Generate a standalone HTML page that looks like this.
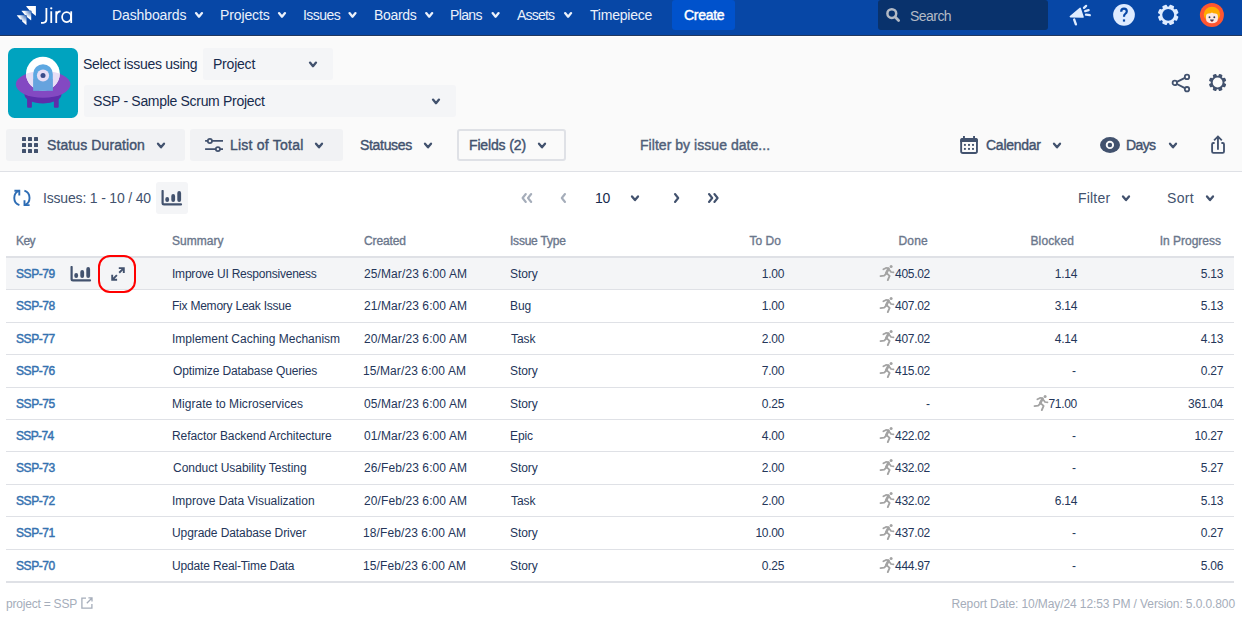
<!DOCTYPE html>
<html><head><meta charset="utf-8"><style>
html,body{margin:0;padding:0;width:1242px;height:617px;overflow:hidden;background:#FFFFFF;position:relative;font-family:"Liberation Sans", sans-serif;}
.t{position:absolute;white-space:nowrap;line-height:1;font-family:"Liberation Sans", sans-serif;}
</style></head><body>
<div style="position:absolute;left:0px;top:0px;width:1242px;height:35px;background:#0747A6;"></div>
<div style="position:absolute;left:0px;top:35px;width:1242px;height:1px;background:#22385E;"></div>
<div style="position:absolute;left:0px;top:36px;width:1242px;height:1px;background:#FFFFFF;"></div>
<div style="position:absolute;left:0px;top:37px;width:1242px;height:134px;background:#FAFAFA;"></div>
<div style="position:absolute;left:0px;top:171px;width:1242px;height:1px;background:#DFE1E6;"></div>
<svg style="position:absolute;left:15px;top:4px" width="24" height="23" viewBox="0 0 24 23">
<defs><radialGradient id="jg0" gradientUnits="userSpaceOnUse" cx="16.2" cy="6.7" r="9.5"><stop offset="0.1" stop-color="#fff" stop-opacity="0.25"/><stop offset="0.75" stop-color="#fff" stop-opacity="1"/></radialGradient><radialGradient id="jg1" gradientUnits="userSpaceOnUse" cx="11.5" cy="11.3" r="9.5"><stop offset="0.1" stop-color="#fff" stop-opacity="0.25"/><stop offset="0.75" stop-color="#fff" stop-opacity="1"/></radialGradient></defs>
<path d="M11.20 2.40 Q11.20 2.10 11.60 2.10 H20.90 V11.50 Q20.90 11.90 20.60 11.70 L16.60 8.40 V7.60 Q16.60 6.40 15.40 6.40 H14.60 Z" fill="#fff"/>
<path d="M6.50 7.00 Q6.50 6.70 6.90 6.70 H16.20 V16.10 Q16.20 16.50 15.90 16.30 L11.90 13.00 V12.20 Q11.90 11.00 10.70 11.00 H9.90 Z" fill="url(#jg0)"/>
<path d="M1.80 11.60 Q1.80 11.30 2.20 11.30 H11.50 V20.70 Q11.50 21.10 11.20 20.90 L7.20 17.60 V16.80 Q7.20 15.60 6.00 15.60 H5.20 Z" fill="url(#jg1)"/>
</svg>
<svg style="position:absolute;left:38px;top:5px" width="38" height="22" viewBox="0 0 38 22">
<path d="M8.4 2.9 V14.6 Q8.4 17.8 5.2 17.8 H3" fill="none" stroke="#fff" stroke-width="1.8"/>
<circle cx="13.25" cy="3.3" r="1.15" fill="#fff"/>
<path d="M13.25 6.3 V18 M18.25 18 V6.3 M18.25 10.6 Q18.8 6.3 22.6 6.3" fill="none" stroke="#fff" stroke-width="1.8"/>
<ellipse cx="28.6" cy="12.1" rx="4.5" ry="5" fill="none" stroke="#fff" stroke-width="1.75"/>
<path d="M33.2 6.3 V18" fill="none" stroke="#fff" stroke-width="1.8"/>
</svg>
<div class="t" style="left:112px;top:8px;font-size:14px;font-weight:400;color:#EBF1FB;letter-spacing:-0.111px;">Dashboards</div>
<svg style="position:absolute;left:193px;top:10px" width="12" height="9.6" viewBox="0 0 12 9.6"><path d="M3.00 3.10 L6.00 6.70 L9.00 3.10" fill="none" stroke="#EBF1FB" stroke-width="2.3" stroke-linecap="round" stroke-linejoin="round"/></svg>
<div class="t" style="left:220px;top:8px;font-size:14px;font-weight:400;color:#EBF1FB;letter-spacing:-0.114px;">Projects</div>
<svg style="position:absolute;left:276px;top:10px" width="12" height="9.6" viewBox="0 0 12 9.6"><path d="M3.00 3.10 L6.00 6.70 L9.00 3.10" fill="none" stroke="#EBF1FB" stroke-width="2.3" stroke-linecap="round" stroke-linejoin="round"/></svg>
<div class="t" style="left:303px;top:8px;font-size:14px;font-weight:400;color:#EBF1FB;letter-spacing:-0.56px;">Issues</div>
<svg style="position:absolute;left:346px;top:10px" width="12" height="9.6" viewBox="0 0 12 9.6"><path d="M3.50 3.10 L6.50 6.70 L9.50 3.10" fill="none" stroke="#EBF1FB" stroke-width="2.3" stroke-linecap="round" stroke-linejoin="round"/></svg>
<div class="t" style="left:374px;top:8px;font-size:14px;font-weight:400;color:#EBF1FB;letter-spacing:-0.3px;">Boards</div>
<svg style="position:absolute;left:423px;top:10px" width="12" height="9.6" viewBox="0 0 12 9.6"><path d="M3.20 3.10 L6.20 6.70 L9.20 3.10" fill="none" stroke="#EBF1FB" stroke-width="2.3" stroke-linecap="round" stroke-linejoin="round"/></svg>
<div class="t" style="left:450px;top:8px;font-size:14px;font-weight:400;color:#EBF1FB;letter-spacing:-0.625px;">Plans</div>
<svg style="position:absolute;left:490px;top:10px" width="12" height="9.6" viewBox="0 0 12 9.6"><path d="M2.60 3.10 L5.60 6.70 L8.60 3.10" fill="none" stroke="#EBF1FB" stroke-width="2.3" stroke-linecap="round" stroke-linejoin="round"/></svg>
<div class="t" style="left:517px;top:8px;font-size:14px;font-weight:400;color:#EBF1FB;letter-spacing:-0.8px;">Assets</div>
<svg style="position:absolute;left:562px;top:10px" width="12" height="9.6" viewBox="0 0 12 9.6"><path d="M3.10 3.10 L6.10 6.70 L9.10 3.10" fill="none" stroke="#EBF1FB" stroke-width="2.3" stroke-linecap="round" stroke-linejoin="round"/></svg>
<div class="t" style="left:590px;top:8px;font-size:14px;font-weight:400;color:#EBF1FB;letter-spacing:-0.212px;">Timepiece</div>
<div style="position:absolute;left:672px;top:0px;width:63px;height:30px;background:#0052CC;border-radius:3px;"></div>
<div class="t" style="left:684px;top:8px;font-size:14px;font-weight:400;color:#FFFFFF;letter-spacing:-0.28px;-webkit-text-stroke:0.45px #FFFFFF;">Create</div>
<div style="position:absolute;left:878px;top:0px;width:170px;height:30px;background:#09326C;border-radius:3px;"></div>
<svg style="position:absolute;left:884px;top:6px" width="18" height="18" viewBox="0 0 18 18"><circle cx="7.8" cy="7.6" r="4.4" fill="none" stroke="#B3BAC5" stroke-width="2.5"/><path d="M11.2 11 L14.6 14.4" stroke="#B3BAC5" stroke-width="2.8" stroke-linecap="round"/></svg>
<div class="t" style="left:910px;top:9px;font-size:14px;font-weight:400;color:#B3BAC5;letter-spacing:-0.54px;">Search</div>
<svg style="position:absolute;left:1068px;top:4px" width="24" height="22" viewBox="0 0 24 22">
<path d="M2.4 12.6 L12.2 4.4 L15 13 Z" fill="#DEEBFF" stroke="#DEEBFF" stroke-width="1.6" stroke-linejoin="round"/>
<path d="M6.2 15.6 L7.9 20.3" stroke="#DEEBFF" stroke-width="2.4" stroke-linecap="round"/>
<path d="M16 3.9 L18.1 1.9 M17.2 7.1 L20.6 6.1 M18 10.6 L21.8 11.2" stroke="#DEEBFF" stroke-width="2.3" stroke-linecap="round"/>
</svg>
<svg style="position:absolute;left:1112px;top:3px" width="24" height="24" viewBox="0 0 24 24">
<circle cx="12" cy="11.85" r="10.85" fill="#DEEBFF"/>
<path d="M9.2 8.7 Q9.2 5.6 12 5.6 Q14.8 5.6 14.8 8.3 Q14.8 9.9 13.2 10.9 Q12 11.6 12 13.8" fill="none" stroke="#0747A6" stroke-width="2.2" stroke-linecap="butt"/>
<rect x="10.9" y="16.4" width="2.2" height="2.2" fill="#0747A6"/>
</svg>
<svg style="position:absolute;left:1156px;top:4px" width="24" height="22" viewBox="0 0 24 22"><circle cx="12.2" cy="10.85" r="8.4" fill="#DEEBFF"/><rect x="9.75" y="0.5499999999999989" width="4.9" height="3.4000000000000004" rx="0.9" fill="#DEEBFF" transform="rotate(22.5 12.2 10.85)"/><rect x="9.75" y="0.5499999999999989" width="4.9" height="3.4000000000000004" rx="0.9" fill="#DEEBFF" transform="rotate(67.5 12.2 10.85)"/><rect x="9.75" y="0.5499999999999989" width="4.9" height="3.4000000000000004" rx="0.9" fill="#DEEBFF" transform="rotate(112.5 12.2 10.85)"/><rect x="9.75" y="0.5499999999999989" width="4.9" height="3.4000000000000004" rx="0.9" fill="#DEEBFF" transform="rotate(157.5 12.2 10.85)"/><rect x="9.75" y="0.5499999999999989" width="4.9" height="3.4000000000000004" rx="0.9" fill="#DEEBFF" transform="rotate(202.5 12.2 10.85)"/><rect x="9.75" y="0.5499999999999989" width="4.9" height="3.4000000000000004" rx="0.9" fill="#DEEBFF" transform="rotate(247.5 12.2 10.85)"/><rect x="9.75" y="0.5499999999999989" width="4.9" height="3.4000000000000004" rx="0.9" fill="#DEEBFF" transform="rotate(292.5 12.2 10.85)"/><rect x="9.75" y="0.5499999999999989" width="4.9" height="3.4000000000000004" rx="0.9" fill="#DEEBFF" transform="rotate(337.5 12.2 10.85)"/><circle cx="12.2" cy="10.85" r="5.95" fill="#0747A6"/></svg>
<svg style="position:absolute;left:1199px;top:2px" width="26" height="26" viewBox="0 0 26 26">
<circle cx="12.9" cy="13" r="12" fill="#FF5630"/>
<ellipse cx="12.95" cy="12.4" rx="8.2" ry="7.6" fill="#FFAB00"/>
<path d="M7 14.5 Q7 11.6 9.5 11.6 Q12 11.6 12.95 10.6 Q13.9 11.6 16.4 11.6 Q18.9 11.6 18.9 14.5 V16.5 Q18.9 21.3 12.95 21.3 Q7 21.3 7 16.5 Z" fill="#FCE6E0"/>
<circle cx="10.5" cy="15.3" r="0.95" fill="#253858"/><circle cx="15.3" cy="15.3" r="0.95" fill="#253858"/>
<path d="M11 17.6 H14.9 Q14.6 19.6 12.95 19.6 Q11.3 19.6 11 17.6 Z" fill="#253858"/>
<path d="M11.8 18.9 Q12.95 18.3 14.1 18.9 Q13.5 19.6 12.95 19.6 Q12.3 19.6 11.8 18.9Z" fill="#DE350B"/>
</svg>
<svg style="position:absolute;left:8px;top:48px" width="70" height="70" viewBox="0 0 70 70">
<defs><clipPath id="domeclip"><circle cx="34.9" cy="25.6" r="16.9"/></clipPath></defs>
<rect x="0" y="0" width="70" height="70" rx="6.5" fill="#00A3BF"/>
<rect x="19.1" y="47" width="4.8" height="12.8" rx="1" fill="#5E2DAA"/>
<rect x="45.9" y="47" width="4.8" height="12.8" rx="1" fill="#5E2DAA"/>
<ellipse cx="35" cy="46.5" rx="18.5" ry="9" fill="#5E2DAA"/>
<ellipse cx="35.15" cy="36.4" rx="27.3" ry="13.4" fill="#8349C2"/>
<circle cx="34.9" cy="25.6" r="16.9" fill="#FFFFFF"/>
<ellipse cx="35.15" cy="36" rx="27.25" ry="13.1" fill="#E7DEF5" clip-path="url(#domeclip)"/>
<path d="M25.2 26 A9.8 9.8 0 0 1 44.8 26 V42.8 H25.2 Z" fill="#5EA8E2"/>
<path d="M25.2 31 V42.8 H44.8 V31 Z" fill="#6E9EDB" opacity="0.55"/>
<circle cx="35" cy="27.5" r="6.1" fill="#E7DEF5"/>
<circle cx="35" cy="27.5" r="2.5" fill="#3A4C8A"/>
</svg>
<div class="t" style="left:83px;top:56.5px;font-size:14px;font-weight:400;color:#172B4D;letter-spacing:-0.294px;">Select issues using</div>
<div style="position:absolute;left:203px;top:48px;width:130px;height:32px;background:#F4F5F7;border-radius:3px;"></div>
<div class="t" style="left:213px;top:56.5px;font-size:14px;font-weight:400;color:#172B4D;letter-spacing:-0.217px;">Project</div>
<svg style="position:absolute;left:307px;top:60px" width="12" height="9.6" viewBox="0 0 12 9.6"><path d="M3.00 2.60 L6.00 6.20 L9.00 2.60" fill="none" stroke="#42526E" stroke-width="2.3" stroke-linecap="round" stroke-linejoin="round"/></svg>
<div style="position:absolute;left:84px;top:85px;width:372px;height:32px;background:#F4F5F7;border-radius:3px;"></div>
<div class="t" style="left:93px;top:94px;font-size:14px;font-weight:400;color:#172B4D;letter-spacing:-0.308px;">SSP - Sample Scrum Project</div>
<svg style="position:absolute;left:430px;top:97px" width="12" height="9.6" viewBox="0 0 12 9.6"><path d="M3.00 2.60 L6.00 6.20 L9.00 2.60" fill="none" stroke="#42526E" stroke-width="2.3" stroke-linecap="round" stroke-linejoin="round"/></svg>
<svg style="position:absolute;left:1170px;top:72px" width="22" height="22" viewBox="0 0 22 22">
<circle cx="4.8" cy="10.9" r="2.2" fill="none" stroke="#42526E" stroke-width="1.8"/>
<circle cx="17" cy="4.9" r="2.2" fill="none" stroke="#42526E" stroke-width="1.8"/>
<circle cx="17" cy="17.2" r="2.2" fill="none" stroke="#42526E" stroke-width="1.8"/>
<path d="M6.9 9.8 L14.9 5.9 M6.9 12 L14.9 16.1" stroke="#42526E" stroke-width="1.9"/>
</svg>
<svg style="position:absolute;left:1206px;top:71px" width="24" height="24" viewBox="0 0 24 24"><circle cx="11.6" cy="11.5" r="6.8" fill="#42526E"/><rect x="9.7" y="2.8000000000000007" width="3.8" height="3.3999999999999995" rx="0.9" fill="#42526E" transform="rotate(22.5 11.6 11.5)"/><rect x="9.7" y="2.8000000000000007" width="3.8" height="3.3999999999999995" rx="0.9" fill="#42526E" transform="rotate(67.5 11.6 11.5)"/><rect x="9.7" y="2.8000000000000007" width="3.8" height="3.3999999999999995" rx="0.9" fill="#42526E" transform="rotate(112.5 11.6 11.5)"/><rect x="9.7" y="2.8000000000000007" width="3.8" height="3.3999999999999995" rx="0.9" fill="#42526E" transform="rotate(157.5 11.6 11.5)"/><rect x="9.7" y="2.8000000000000007" width="3.8" height="3.3999999999999995" rx="0.9" fill="#42526E" transform="rotate(202.5 11.6 11.5)"/><rect x="9.7" y="2.8000000000000007" width="3.8" height="3.3999999999999995" rx="0.9" fill="#42526E" transform="rotate(247.5 11.6 11.5)"/><rect x="9.7" y="2.8000000000000007" width="3.8" height="3.3999999999999995" rx="0.9" fill="#42526E" transform="rotate(292.5 11.6 11.5)"/><rect x="9.7" y="2.8000000000000007" width="3.8" height="3.3999999999999995" rx="0.9" fill="#42526E" transform="rotate(337.5 11.6 11.5)"/><circle cx="11.6" cy="11.5" r="4.9" fill="#FAFAFA"/></svg>
<div style="position:absolute;left:6px;top:129px;width:179px;height:32px;background:#F1F2F4;border-radius:3px;"></div>
<svg style="position:absolute;left:22px;top:137px" width="16" height="16" viewBox="0 0 16 16"><rect x="0" y="0" width="4" height="4" rx="0.6" fill="#42526E"/><rect x="6" y="0" width="4" height="4" rx="0.6" fill="#42526E"/><rect x="12" y="0" width="4" height="4" rx="0.6" fill="#42526E"/><rect x="0" y="6" width="4" height="4" rx="0.6" fill="#42526E"/><rect x="6" y="6" width="4" height="4" rx="0.6" fill="#42526E"/><rect x="12" y="6" width="4" height="4" rx="0.6" fill="#42526E"/><rect x="0" y="12" width="4" height="4" rx="0.6" fill="#42526E"/><rect x="6" y="12" width="4" height="4" rx="0.6" fill="#42526E"/><rect x="12" y="12" width="4" height="4" rx="0.6" fill="#42526E"/></svg>
<div class="t" style="left:47px;top:138px;font-size:14px;font-weight:400;color:#42526E;letter-spacing:0.1px;-webkit-text-stroke:0.4px #42526E;">Status Duration</div>
<svg style="position:absolute;left:155px;top:141px" width="12" height="9.6" viewBox="0 0 12 9.6"><path d="M3.00 2.70 L6.00 6.30 L9.00 2.70" fill="none" stroke="#42526E" stroke-width="2.3" stroke-linecap="round" stroke-linejoin="round"/></svg>
<div style="position:absolute;left:190px;top:129px;width:153px;height:32px;background:#F1F2F4;border-radius:3px;"></div>
<svg style="position:absolute;left:204px;top:136px" width="20" height="17" viewBox="0 0 20 17">
<path d="M1.1 4.9 H19 M1.1 13.1 H19" stroke="#42526E" stroke-width="1.85"/>
<circle cx="5.9" cy="4.9" r="2.1" fill="#F1F2F4" stroke="#42526E" stroke-width="1.75"/>
<circle cx="13.9" cy="13.1" r="2.1" fill="#F1F2F4" stroke="#42526E" stroke-width="1.75"/>
</svg>
<div class="t" style="left:230px;top:138px;font-size:14px;font-weight:400;color:#42526E;letter-spacing:0.225px;-webkit-text-stroke:0.4px #42526E;">List of Total</div>
<svg style="position:absolute;left:313px;top:141px" width="12" height="9.6" viewBox="0 0 12 9.6"><path d="M3.00 2.70 L6.00 6.30 L9.00 2.70" fill="none" stroke="#42526E" stroke-width="2.3" stroke-linecap="round" stroke-linejoin="round"/></svg>
<div class="t" style="left:360px;top:138px;font-size:14px;font-weight:400;color:#42526E;letter-spacing:-0.314px;-webkit-text-stroke:0.4px #42526E;">Statuses</div>
<svg style="position:absolute;left:422px;top:141px" width="12" height="9.6" viewBox="0 0 12 9.6"><path d="M3.00 2.70 L6.00 6.30 L9.00 2.70" fill="none" stroke="#42526E" stroke-width="2.3" stroke-linecap="round" stroke-linejoin="round"/></svg>
<div style="position:absolute;left:457px;top:129px;width:105px;height:28px;border:2px solid #DFE1E6;border-radius:3px;"></div>
<div class="t" style="left:469px;top:138px;font-size:14px;font-weight:400;color:#42526E;letter-spacing:-0.144px;-webkit-text-stroke:0.4px #42526E;">Fields (2)</div>
<svg style="position:absolute;left:536px;top:141px" width="12" height="9.6" viewBox="0 0 12 9.6"><path d="M3.00 2.70 L6.00 6.30 L9.00 2.70" fill="none" stroke="#42526E" stroke-width="2.3" stroke-linecap="round" stroke-linejoin="round"/></svg>
<div class="t" style="left:640px;top:138px;font-size:14px;font-weight:400;color:#505F79;letter-spacing:0.041px;-webkit-text-stroke:0.4px #505F79;">Filter by issue date...</div>
<svg style="position:absolute;left:959px;top:135px" width="20" height="20" viewBox="0 0 20 20">
<rect x="2.15" y="3.85" width="15.8" height="14.1" rx="1.8" fill="none" stroke="#42526E" stroke-width="1.9"/>
<path d="M1.2 7 V4.9 Q1.2 2.9 3.2 2.9 H16.9 Q18.9 2.9 18.9 4.9 V7 Z" fill="#42526E"/>
<rect x="4" y="1" width="1.9" height="3" fill="#42526E"/><rect x="14.1" y="1" width="1.9" height="3" fill="#42526E"/>
<rect x="4.95" y="8.95" width="1.9" height="1.9" fill="#42526E"/><rect x="9.05" y="8.95" width="1.9" height="1.9" fill="#42526E"/><rect x="13.05" y="8.95" width="1.9" height="1.9" fill="#42526E"/>
<rect x="4.95" y="12.95" width="1.9" height="1.9" fill="#42526E"/><rect x="9.05" y="12.95" width="1.9" height="1.9" fill="#42526E"/><rect x="13.05" y="12.95" width="1.9" height="1.9" fill="#42526E"/>
</svg>
<div class="t" style="left:986px;top:138px;font-size:14px;font-weight:400;color:#42526E;letter-spacing:-0.257px;-webkit-text-stroke:0.4px #42526E;">Calendar</div>
<svg style="position:absolute;left:1051px;top:141px" width="12" height="9.6" viewBox="0 0 12 9.6"><path d="M3.00 2.70 L6.00 6.30 L9.00 2.70" fill="none" stroke="#42526E" stroke-width="2.3" stroke-linecap="round" stroke-linejoin="round"/></svg>
<svg style="position:absolute;left:1099px;top:135px" width="22" height="20" viewBox="0 0 22 20">
<ellipse cx="11" cy="10" rx="10" ry="7.9" fill="#42526E"/>
<circle cx="10.9" cy="9.9" r="3.2" fill="none" stroke="#FAFAFA" stroke-width="1.9"/>
</svg>
<div class="t" style="left:1126px;top:138px;font-size:14px;font-weight:400;color:#42526E;letter-spacing:-0.6px;-webkit-text-stroke:0.4px #42526E;">Days</div>
<svg style="position:absolute;left:1167px;top:141px" width="12" height="9.6" viewBox="0 0 12 9.6"><path d="M3.00 2.70 L6.00 6.30 L9.00 2.70" fill="none" stroke="#42526E" stroke-width="2.3" stroke-linecap="round" stroke-linejoin="round"/></svg>
<svg style="position:absolute;left:1209px;top:135px" width="18" height="20" viewBox="0 0 18 20">
<path d="M5.6 8 H4.4 Q3.1 8 3.1 9.3 V16.5 Q3.1 17.8 4.4 17.8 H13.7 Q15 17.8 15 16.5 V9.3 Q15 8 13.7 8 H12.4" fill="none" stroke="#42526E" stroke-width="1.85"/>
<path d="M8.95 14.7 V2.2 M5.1 5.3 L8.95 1.45 L12.8 5.3" fill="none" stroke="#42526E" stroke-width="1.85"/>
</svg>
<svg style="position:absolute;left:12px;top:188px" width="20" height="20" viewBox="0 0 20 20">
<path d="M7.4 17.1 A7.62 7.62 0 0 1 7.4 2.7" fill="none" stroke="#2D6CB4" stroke-width="1.9"/>
<path d="M2.4 2.7 H7.3 V7.6" fill="none" stroke="#2D6CB4" stroke-width="1.9"/>
<path d="M12.4 2.7 A7.62 7.62 0 0 1 12.4 17.1" fill="none" stroke="#2D6CB4" stroke-width="1.9"/>
<path d="M17.6 17.1 H12.5 V12.2" fill="none" stroke="#2D6CB4" stroke-width="1.9"/>
</svg>
<div class="t" style="left:43px;top:191px;font-size:14px;font-weight:400;color:#42526E;letter-spacing:-0.178px;">Issues: 1 - 10 / 40</div>
<div style="position:absolute;left:156px;top:182px;width:32px;height:32px;background:#F4F5F7;border-radius:3px;"></div>
<svg style="position:absolute;left:161px;top:190px" width="22" height="16" viewBox="0 0 22 16">
<path d="M1.6 1 V13 Q1.6 14.4 3 14.4 H20" fill="none" stroke="#42526E" stroke-width="2.2" stroke-linecap="round"/>
<rect x="4.3" y="7" width="3.8" height="5" rx="1.9" fill="#42526E"/>
<rect x="10.3" y="4" width="3.8" height="8" rx="1.9" fill="#42526E"/>
<rect x="16.3" y="1" width="3.8" height="11" rx="1.9" fill="#42526E"/>
</svg>
<svg style="position:absolute;left:518px;top:192px" width="16" height="12" viewBox="0 0 16 12"><path d="M7.8 2 L4.6 6 L7.8 10 M13.2 2 L10 6 L13.2 10" fill="none" stroke="#A5ADBA" stroke-width="2.1" stroke-linecap="round" stroke-linejoin="round"/></svg>
<svg style="position:absolute;left:558px;top:192px" width="12" height="12" viewBox="0 0 12 12"><path d="M7 2 L3.8 6 L7 10" fill="none" stroke="#A5ADBA" stroke-width="2.1" stroke-linecap="round" stroke-linejoin="round"/></svg>
<div class="t" style="left:595px;top:191px;font-size:14px;font-weight:400;color:#172B4D;letter-spacing:-0.2px;">10</div>
<svg style="position:absolute;left:629px;top:194px" width="12" height="9.6" viewBox="0 0 12 9.6"><path d="M3.00 2.50 L6.00 6.10 L9.00 2.50" fill="none" stroke="#42526E" stroke-width="2.3" stroke-linecap="round" stroke-linejoin="round"/></svg>
<svg style="position:absolute;left:670px;top:192px" width="12" height="12" viewBox="0 0 12 12"><path d="M5 2 L8.2 6 L5 10" fill="none" stroke="#42526E" stroke-width="2.1" stroke-linecap="round" stroke-linejoin="round"/></svg>
<svg style="position:absolute;left:705px;top:192px" width="18" height="12" viewBox="0 0 18 12"><path d="M4 2 L7.2 6 L4 10 M9.4 2 L12.6 6 L9.4 10" fill="none" stroke="#42526E" stroke-width="2.1" stroke-linecap="round" stroke-linejoin="round"/></svg>
<div class="t" style="left:1078px;top:191px;font-size:14px;font-weight:400;color:#42526E;letter-spacing:0.2px;">Filter</div>
<svg style="position:absolute;left:1120px;top:194px" width="12" height="9.6" viewBox="0 0 12 9.6"><path d="M3.00 2.50 L6.00 6.10 L9.00 2.50" fill="none" stroke="#42526E" stroke-width="2.3" stroke-linecap="round" stroke-linejoin="round"/></svg>
<div class="t" style="left:1167px;top:191px;font-size:14px;font-weight:400;color:#42526E;letter-spacing:0.333px;">Sort</div>
<svg style="position:absolute;left:1204px;top:194px" width="12" height="9.6" viewBox="0 0 12 9.6"><path d="M3.00 2.50 L6.00 6.10 L9.00 2.50" fill="none" stroke="#42526E" stroke-width="2.3" stroke-linecap="round" stroke-linejoin="round"/></svg>
<div class="t" style="left:16px;top:235px;font-size:12px;font-weight:400;color:#6B778C;letter-spacing:-0.6px;-webkit-text-stroke:0.35px #6B778C;">Key</div>
<div class="t" style="left:172px;top:235px;font-size:12px;font-weight:400;color:#6B778C;letter-spacing:0.033px;-webkit-text-stroke:0.35px #6B778C;">Summary</div>
<div class="t" style="left:364px;top:235px;font-size:12px;font-weight:400;color:#6B778C;letter-spacing:-0.117px;-webkit-text-stroke:0.35px #6B778C;">Created</div>
<div class="t" style="left:510px;top:235px;font-size:12px;font-weight:400;color:#6B778C;letter-spacing:-0.222px;-webkit-text-stroke:0.35px #6B778C;">Issue Type</div>
<div class="t" style="right:461px;top:235px;font-size:12px;font-weight:400;color:#6B778C;letter-spacing:0.05px;-webkit-text-stroke:0.35px #6B778C;">To Do</div>
<div class="t" style="right:314px;top:235px;font-size:12px;font-weight:400;color:#6B778C;letter-spacing:0.233px;-webkit-text-stroke:0.35px #6B778C;">Done</div>
<div class="t" style="right:168px;top:235px;font-size:12px;font-weight:400;color:#6B778C;letter-spacing:0.117px;-webkit-text-stroke:0.35px #6B778C;">Blocked</div>
<div class="t" style="right:21px;top:235px;font-size:12px;font-weight:400;color:#6B778C;-webkit-text-stroke:0.35px #6B778C;">In Progress</div>
<div style="position:absolute;left:6px;top:256px;width:1228px;height:2px;background:#DFE1E6;"></div>
<div style="position:absolute;left:6px;top:258px;width:1228px;height:31px;background:#F4F5F7;"></div>
<div style="position:absolute;left:6px;top:289px;width:1228px;height:1px;background:#DFE1E6;"></div>
<div class="t" style="left:16px;top:268px;font-size:12px;font-weight:400;color:#3572B0;letter-spacing:-0.44px;-webkit-text-stroke:0.45px #3572B0;">SSP-79</div>
<div class="t" style="left:172px;top:268px;font-size:12px;font-weight:400;color:#24365A;letter-spacing:-0.217px;">Improve UI Responsiveness</div>
<div class="t" style="left:364px;top:268px;font-size:12px;font-weight:400;color:#24365A;letter-spacing:0.1px;">25/Mar/23 6:00 AM</div>
<div class="t" style="left:510px;top:268px;font-size:12px;font-weight:400;color:#24365A;letter-spacing:-0.08px;">Story</div>
<div class="t" style="right:458px;top:268px;font-size:12px;font-weight:400;color:#24365A;letter-spacing:-0.3px;">1.00</div>
<div class="t" style="right:312px;top:268px;font-size:12px;font-weight:400;color:#24365A;letter-spacing:-0.3px;">405.02</div><svg style="position:absolute;left:877px;top:262px" width="20" height="22" viewBox="0 0 20 22"><g fill="none" stroke="#A3A3A3" stroke-linecap="round" stroke-linejoin="round"><circle cx="14.1" cy="4.5" r="1.5" fill="#A3A3A3" stroke="none"/><path d="M6.4 7.3 L8.6 6.2 Q10 5.6 11.3 6.4" stroke-width="1.8"/><path d="M11.6 6.6 L9.2 11.2" stroke-width="2.6"/><path d="M12.5 7.9 L14 10 L16.5 10.3" stroke-width="1.7"/><path d="M8.9 12 L7.2 13.6 L3.5 14.2" stroke-width="1.8"/><path d="M9.8 11.4 L12.6 13.9 L10.8 18.1" stroke-width="1.9"/></g></svg>
<div class="t" style="right:165px;top:268px;font-size:12px;font-weight:400;color:#24365A;letter-spacing:-0.3px;">1.14</div>
<div class="t" style="right:19px;top:268px;font-size:12px;font-weight:400;color:#24365A;letter-spacing:-0.3px;">5.13</div>
<div style="position:absolute;left:6px;top:322px;width:1228px;height:1px;background:#DFE1E6;"></div>
<div class="t" style="left:16px;top:300px;font-size:12px;font-weight:400;color:#3572B0;letter-spacing:-0.44px;-webkit-text-stroke:0.45px #3572B0;">SSP-78</div>
<div class="t" style="left:172px;top:300px;font-size:12px;font-weight:400;color:#24365A;letter-spacing:-0.23px;">Fix Memory Leak Issue</div>
<div class="t" style="left:364px;top:300px;font-size:12px;font-weight:400;color:#24365A;letter-spacing:0.1px;">21/Mar/23 6:00 AM</div>
<div class="t" style="left:510px;top:300px;font-size:12px;font-weight:400;color:#24365A;letter-spacing:-0.08px;">Bug</div>
<div class="t" style="right:458px;top:300px;font-size:12px;font-weight:400;color:#24365A;letter-spacing:-0.3px;">1.00</div>
<div class="t" style="right:312px;top:300px;font-size:12px;font-weight:400;color:#24365A;letter-spacing:-0.3px;">407.02</div><svg style="position:absolute;left:877px;top:294px" width="20" height="22" viewBox="0 0 20 22"><g fill="none" stroke="#A3A3A3" stroke-linecap="round" stroke-linejoin="round"><circle cx="14.1" cy="4.5" r="1.5" fill="#A3A3A3" stroke="none"/><path d="M6.4 7.3 L8.6 6.2 Q10 5.6 11.3 6.4" stroke-width="1.8"/><path d="M11.6 6.6 L9.2 11.2" stroke-width="2.6"/><path d="M12.5 7.9 L14 10 L16.5 10.3" stroke-width="1.7"/><path d="M8.9 12 L7.2 13.6 L3.5 14.2" stroke-width="1.8"/><path d="M9.8 11.4 L12.6 13.9 L10.8 18.1" stroke-width="1.9"/></g></svg>
<div class="t" style="right:165px;top:300px;font-size:12px;font-weight:400;color:#24365A;letter-spacing:-0.3px;">3.14</div>
<div class="t" style="right:19px;top:300px;font-size:12px;font-weight:400;color:#24365A;letter-spacing:-0.3px;">5.13</div>
<div style="position:absolute;left:6px;top:354px;width:1228px;height:1px;background:#DFE1E6;"></div>
<div class="t" style="left:16px;top:333px;font-size:12px;font-weight:400;color:#3572B0;letter-spacing:-0.44px;-webkit-text-stroke:0.45px #3572B0;">SSP-77</div>
<div class="t" style="left:172px;top:333px;font-size:12px;font-weight:400;color:#24365A;">Implement Caching Mechanism</div>
<div class="t" style="left:364px;top:333px;font-size:12px;font-weight:400;color:#24365A;letter-spacing:0.1px;">20/Mar/23 6:00 AM</div>
<div class="t" style="left:511px;top:333px;font-size:12px;font-weight:400;color:#24365A;letter-spacing:-0.08px;">Task</div>
<div class="t" style="right:458px;top:333px;font-size:12px;font-weight:400;color:#24365A;letter-spacing:-0.3px;">2.00</div>
<div class="t" style="right:312px;top:333px;font-size:12px;font-weight:400;color:#24365A;letter-spacing:-0.3px;">407.02</div><svg style="position:absolute;left:877px;top:327px" width="20" height="22" viewBox="0 0 20 22"><g fill="none" stroke="#A3A3A3" stroke-linecap="round" stroke-linejoin="round"><circle cx="14.1" cy="4.5" r="1.5" fill="#A3A3A3" stroke="none"/><path d="M6.4 7.3 L8.6 6.2 Q10 5.6 11.3 6.4" stroke-width="1.8"/><path d="M11.6 6.6 L9.2 11.2" stroke-width="2.6"/><path d="M12.5 7.9 L14 10 L16.5 10.3" stroke-width="1.7"/><path d="M8.9 12 L7.2 13.6 L3.5 14.2" stroke-width="1.8"/><path d="M9.8 11.4 L12.6 13.9 L10.8 18.1" stroke-width="1.9"/></g></svg>
<div class="t" style="right:165px;top:333px;font-size:12px;font-weight:400;color:#24365A;letter-spacing:-0.3px;">4.14</div>
<div class="t" style="right:19px;top:333px;font-size:12px;font-weight:400;color:#24365A;letter-spacing:-0.3px;">4.13</div>
<div style="position:absolute;left:6px;top:387px;width:1228px;height:1px;background:#DFE1E6;"></div>
<div class="t" style="left:16px;top:365px;font-size:12px;font-weight:400;color:#3572B0;letter-spacing:-0.44px;-webkit-text-stroke:0.45px #3572B0;">SSP-76</div>
<div class="t" style="left:173px;top:365px;font-size:12px;font-weight:400;color:#24365A;letter-spacing:-0.133px;">Optimize Database Queries</div>
<div class="t" style="left:363px;top:365px;font-size:12px;font-weight:400;color:#24365A;letter-spacing:0.1px;">15/Mar/23 6:00 AM</div>
<div class="t" style="left:510px;top:365px;font-size:12px;font-weight:400;color:#24365A;letter-spacing:-0.08px;">Story</div>
<div class="t" style="right:458px;top:365px;font-size:12px;font-weight:400;color:#24365A;letter-spacing:-0.3px;">7.00</div>
<div class="t" style="right:312px;top:365px;font-size:12px;font-weight:400;color:#24365A;letter-spacing:-0.3px;">415.02</div><svg style="position:absolute;left:877px;top:359px" width="20" height="22" viewBox="0 0 20 22"><g fill="none" stroke="#A3A3A3" stroke-linecap="round" stroke-linejoin="round"><circle cx="14.1" cy="4.5" r="1.5" fill="#A3A3A3" stroke="none"/><path d="M6.4 7.3 L8.6 6.2 Q10 5.6 11.3 6.4" stroke-width="1.8"/><path d="M11.6 6.6 L9.2 11.2" stroke-width="2.6"/><path d="M12.5 7.9 L14 10 L16.5 10.3" stroke-width="1.7"/><path d="M8.9 12 L7.2 13.6 L3.5 14.2" stroke-width="1.8"/><path d="M9.8 11.4 L12.6 13.9 L10.8 18.1" stroke-width="1.9"/></g></svg>
<div class="t" style="right:166px;top:365px;font-size:12px;font-weight:400;color:#24365A;">-</div>
<div class="t" style="right:19px;top:365px;font-size:12px;font-weight:400;color:#24365A;letter-spacing:-0.3px;">0.27</div>
<div style="position:absolute;left:6px;top:419px;width:1228px;height:1px;background:#DFE1E6;"></div>
<div class="t" style="left:16px;top:398px;font-size:12px;font-weight:400;color:#3572B0;letter-spacing:-0.44px;-webkit-text-stroke:0.45px #3572B0;">SSP-75</div>
<div class="t" style="left:172px;top:398px;font-size:12px;font-weight:400;color:#24365A;letter-spacing:0.039px;">Migrate to Microservices</div>
<div class="t" style="left:364px;top:398px;font-size:12px;font-weight:400;color:#24365A;letter-spacing:0.1px;">05/Mar/23 6:00 AM</div>
<div class="t" style="left:510px;top:398px;font-size:12px;font-weight:400;color:#24365A;letter-spacing:-0.08px;">Story</div>
<div class="t" style="right:458px;top:398px;font-size:12px;font-weight:400;color:#24365A;letter-spacing:-0.3px;">0.25</div>
<div class="t" style="right:312px;top:398px;font-size:12px;font-weight:400;color:#24365A;">-</div>
<div class="t" style="right:165px;top:398px;font-size:12px;font-weight:400;color:#24365A;letter-spacing:-0.3px;">71.00</div><svg style="position:absolute;left:1031px;top:392px" width="20" height="22" viewBox="0 0 20 22"><g fill="none" stroke="#A3A3A3" stroke-linecap="round" stroke-linejoin="round"><circle cx="14.1" cy="4.5" r="1.5" fill="#A3A3A3" stroke="none"/><path d="M6.4 7.3 L8.6 6.2 Q10 5.6 11.3 6.4" stroke-width="1.8"/><path d="M11.6 6.6 L9.2 11.2" stroke-width="2.6"/><path d="M12.5 7.9 L14 10 L16.5 10.3" stroke-width="1.7"/><path d="M8.9 12 L7.2 13.6 L3.5 14.2" stroke-width="1.8"/><path d="M9.8 11.4 L12.6 13.9 L10.8 18.1" stroke-width="1.9"/></g></svg>
<div class="t" style="right:19px;top:398px;font-size:12px;font-weight:400;color:#24365A;letter-spacing:-0.3px;">361.04</div>
<div style="position:absolute;left:6px;top:451px;width:1228px;height:1px;background:#DFE1E6;"></div>
<div class="t" style="left:16px;top:430px;font-size:12px;font-weight:400;color:#3572B0;letter-spacing:-0.64px;-webkit-text-stroke:0.45px #3572B0;">SSP-74</div>
<div class="t" style="left:172px;top:430px;font-size:12px;font-weight:400;color:#24365A;letter-spacing:-0.089px;">Refactor Backend Architecture</div>
<div class="t" style="left:364px;top:430px;font-size:12px;font-weight:400;color:#24365A;letter-spacing:0.1px;">01/Mar/23 6:00 AM</div>
<div class="t" style="left:510px;top:430px;font-size:12px;font-weight:400;color:#24365A;letter-spacing:-0.08px;">Epic</div>
<div class="t" style="right:458px;top:430px;font-size:12px;font-weight:400;color:#24365A;letter-spacing:-0.3px;">4.00</div>
<div class="t" style="right:312px;top:430px;font-size:12px;font-weight:400;color:#24365A;letter-spacing:-0.3px;">422.02</div><svg style="position:absolute;left:877px;top:424px" width="20" height="22" viewBox="0 0 20 22"><g fill="none" stroke="#A3A3A3" stroke-linecap="round" stroke-linejoin="round"><circle cx="14.1" cy="4.5" r="1.5" fill="#A3A3A3" stroke="none"/><path d="M6.4 7.3 L8.6 6.2 Q10 5.6 11.3 6.4" stroke-width="1.8"/><path d="M11.6 6.6 L9.2 11.2" stroke-width="2.6"/><path d="M12.5 7.9 L14 10 L16.5 10.3" stroke-width="1.7"/><path d="M8.9 12 L7.2 13.6 L3.5 14.2" stroke-width="1.8"/><path d="M9.8 11.4 L12.6 13.9 L10.8 18.1" stroke-width="1.9"/></g></svg>
<div class="t" style="right:166px;top:430px;font-size:12px;font-weight:400;color:#24365A;">-</div>
<div class="t" style="right:19px;top:430px;font-size:12px;font-weight:400;color:#24365A;letter-spacing:-0.3px;">10.27</div>
<div style="position:absolute;left:6px;top:484px;width:1228px;height:1px;background:#DFE1E6;"></div>
<div class="t" style="left:16px;top:462px;font-size:12px;font-weight:400;color:#3572B0;letter-spacing:-0.44px;-webkit-text-stroke:0.45px #3572B0;">SSP-73</div>
<div class="t" style="left:173px;top:462px;font-size:12px;font-weight:400;color:#24365A;letter-spacing:-0.038px;">Conduct Usability Testing</div>
<div class="t" style="left:364px;top:462px;font-size:12px;font-weight:400;color:#24365A;letter-spacing:0.1px;">26/Feb/23 6:00 AM</div>
<div class="t" style="left:510px;top:462px;font-size:12px;font-weight:400;color:#24365A;letter-spacing:-0.08px;">Story</div>
<div class="t" style="right:458px;top:462px;font-size:12px;font-weight:400;color:#24365A;letter-spacing:-0.3px;">2.00</div>
<div class="t" style="right:312px;top:462px;font-size:12px;font-weight:400;color:#24365A;letter-spacing:-0.3px;">432.02</div><svg style="position:absolute;left:877px;top:456px" width="20" height="22" viewBox="0 0 20 22"><g fill="none" stroke="#A3A3A3" stroke-linecap="round" stroke-linejoin="round"><circle cx="14.1" cy="4.5" r="1.5" fill="#A3A3A3" stroke="none"/><path d="M6.4 7.3 L8.6 6.2 Q10 5.6 11.3 6.4" stroke-width="1.8"/><path d="M11.6 6.6 L9.2 11.2" stroke-width="2.6"/><path d="M12.5 7.9 L14 10 L16.5 10.3" stroke-width="1.7"/><path d="M8.9 12 L7.2 13.6 L3.5 14.2" stroke-width="1.8"/><path d="M9.8 11.4 L12.6 13.9 L10.8 18.1" stroke-width="1.9"/></g></svg>
<div class="t" style="right:166px;top:462px;font-size:12px;font-weight:400;color:#24365A;">-</div>
<div class="t" style="right:19px;top:462px;font-size:12px;font-weight:400;color:#24365A;letter-spacing:-0.3px;">5.27</div>
<div style="position:absolute;left:6px;top:516px;width:1228px;height:1px;background:#DFE1E6;"></div>
<div class="t" style="left:16px;top:495px;font-size:12px;font-weight:400;color:#3572B0;letter-spacing:-0.44px;-webkit-text-stroke:0.45px #3572B0;">SSP-72</div>
<div class="t" style="left:172px;top:495px;font-size:12px;font-weight:400;color:#24365A;letter-spacing:0.004px;">Improve Data Visualization</div>
<div class="t" style="left:364px;top:495px;font-size:12px;font-weight:400;color:#24365A;letter-spacing:0.1px;">20/Feb/23 6:00 AM</div>
<div class="t" style="left:511px;top:495px;font-size:12px;font-weight:400;color:#24365A;letter-spacing:-0.08px;">Task</div>
<div class="t" style="right:458px;top:495px;font-size:12px;font-weight:400;color:#24365A;letter-spacing:-0.3px;">2.00</div>
<div class="t" style="right:312px;top:495px;font-size:12px;font-weight:400;color:#24365A;letter-spacing:-0.3px;">432.02</div><svg style="position:absolute;left:877px;top:489px" width="20" height="22" viewBox="0 0 20 22"><g fill="none" stroke="#A3A3A3" stroke-linecap="round" stroke-linejoin="round"><circle cx="14.1" cy="4.5" r="1.5" fill="#A3A3A3" stroke="none"/><path d="M6.4 7.3 L8.6 6.2 Q10 5.6 11.3 6.4" stroke-width="1.8"/><path d="M11.6 6.6 L9.2 11.2" stroke-width="2.6"/><path d="M12.5 7.9 L14 10 L16.5 10.3" stroke-width="1.7"/><path d="M8.9 12 L7.2 13.6 L3.5 14.2" stroke-width="1.8"/><path d="M9.8 11.4 L12.6 13.9 L10.8 18.1" stroke-width="1.9"/></g></svg>
<div class="t" style="right:165px;top:495px;font-size:12px;font-weight:400;color:#24365A;letter-spacing:-0.3px;">6.14</div>
<div class="t" style="right:19px;top:495px;font-size:12px;font-weight:400;color:#24365A;letter-spacing:-0.3px;">5.13</div>
<div style="position:absolute;left:6px;top:549px;width:1228px;height:1px;background:#DFE1E6;"></div>
<div class="t" style="left:16px;top:527px;font-size:12px;font-weight:400;color:#3572B0;letter-spacing:-0.44px;-webkit-text-stroke:0.45px #3572B0;">SSP-71</div>
<div class="t" style="left:172px;top:527px;font-size:12px;font-weight:400;color:#24365A;letter-spacing:-0.086px;">Upgrade Database Driver</div>
<div class="t" style="left:363px;top:527px;font-size:12px;font-weight:400;color:#24365A;letter-spacing:0.1px;">18/Feb/23 6:00 AM</div>
<div class="t" style="left:510px;top:527px;font-size:12px;font-weight:400;color:#24365A;letter-spacing:-0.08px;">Story</div>
<div class="t" style="right:458px;top:527px;font-size:12px;font-weight:400;color:#24365A;letter-spacing:-0.3px;">10.00</div>
<div class="t" style="right:312px;top:527px;font-size:12px;font-weight:400;color:#24365A;letter-spacing:-0.3px;">437.02</div><svg style="position:absolute;left:877px;top:521px" width="20" height="22" viewBox="0 0 20 22"><g fill="none" stroke="#A3A3A3" stroke-linecap="round" stroke-linejoin="round"><circle cx="14.1" cy="4.5" r="1.5" fill="#A3A3A3" stroke="none"/><path d="M6.4 7.3 L8.6 6.2 Q10 5.6 11.3 6.4" stroke-width="1.8"/><path d="M11.6 6.6 L9.2 11.2" stroke-width="2.6"/><path d="M12.5 7.9 L14 10 L16.5 10.3" stroke-width="1.7"/><path d="M8.9 12 L7.2 13.6 L3.5 14.2" stroke-width="1.8"/><path d="M9.8 11.4 L12.6 13.9 L10.8 18.1" stroke-width="1.9"/></g></svg>
<div class="t" style="right:166px;top:527px;font-size:12px;font-weight:400;color:#24365A;">-</div>
<div class="t" style="right:19px;top:527px;font-size:12px;font-weight:400;color:#24365A;letter-spacing:-0.3px;">0.27</div>
<div class="t" style="left:16px;top:560px;font-size:12px;font-weight:400;color:#3572B0;letter-spacing:-0.44px;-webkit-text-stroke:0.45px #3572B0;">SSP-70</div>
<div class="t" style="left:172px;top:560px;font-size:12px;font-weight:400;color:#24365A;letter-spacing:-0.155px;">Update Real-Time Data</div>
<div class="t" style="left:363px;top:560px;font-size:12px;font-weight:400;color:#24365A;letter-spacing:0.1px;">15/Feb/23 6:00 AM</div>
<div class="t" style="left:510px;top:560px;font-size:12px;font-weight:400;color:#24365A;letter-spacing:-0.08px;">Story</div>
<div class="t" style="right:458px;top:560px;font-size:12px;font-weight:400;color:#24365A;letter-spacing:-0.3px;">0.25</div>
<div class="t" style="right:312px;top:560px;font-size:12px;font-weight:400;color:#24365A;letter-spacing:-0.3px;">444.97</div><svg style="position:absolute;left:877px;top:554px" width="20" height="22" viewBox="0 0 20 22"><g fill="none" stroke="#A3A3A3" stroke-linecap="round" stroke-linejoin="round"><circle cx="14.1" cy="4.5" r="1.5" fill="#A3A3A3" stroke="none"/><path d="M6.4 7.3 L8.6 6.2 Q10 5.6 11.3 6.4" stroke-width="1.8"/><path d="M11.6 6.6 L9.2 11.2" stroke-width="2.6"/><path d="M12.5 7.9 L14 10 L16.5 10.3" stroke-width="1.7"/><path d="M8.9 12 L7.2 13.6 L3.5 14.2" stroke-width="1.8"/><path d="M9.8 11.4 L12.6 13.9 L10.8 18.1" stroke-width="1.9"/></g></svg>
<div class="t" style="right:166px;top:560px;font-size:12px;font-weight:400;color:#24365A;">-</div>
<div class="t" style="right:19px;top:560px;font-size:12px;font-weight:400;color:#24365A;letter-spacing:-0.3px;">5.06</div>
<div style="position:absolute;left:6px;top:581px;width:1228px;height:2px;background:#DFE1E6;"></div>
<svg style="position:absolute;left:70px;top:266px" width="22" height="16" viewBox="0 0 22 16">
<path d="M1.6 1 V13 Q1.6 14.4 3 14.4 H20" fill="none" stroke="#42526E" stroke-width="2.2" stroke-linecap="round"/>
<rect x="4.3" y="7" width="3.8" height="5" rx="1.9" fill="#42526E"/>
<rect x="10.3" y="4" width="3.8" height="8" rx="1.9" fill="#42526E"/>
<rect x="16.3" y="1" width="3.8" height="11" rx="1.9" fill="#42526E"/>
</svg>
<div style="position:absolute;left:98px;top:255px;width:34px;height:34px;border:2.4px solid #FF0000;border-radius:12px;"></div>
<svg style="position:absolute;left:109px;top:265px" width="18" height="18" viewBox="0 0 18 18">
<path d="M9.8 3.15 H14.8 V7.9 M14.8 3.15 L10.2 7.7" fill="none" stroke="#42526E" stroke-width="1.9"/>
<path d="M3.2 9.8 V14.8 H8.1 M3.2 14.8 L7.9 10.1" fill="none" stroke="#42526E" stroke-width="1.9"/>
</svg>
<div class="t" style="left:6px;top:598px;font-size:12px;font-weight:400;color:#A5ADBA;letter-spacing:-0.208px;">project = SSP</div>
<svg style="position:absolute;left:80px;top:596px" width="14" height="14" viewBox="0 0 14 14">
<path d="M6 2.1 H1.9 V12.1 H11.9 V8" fill="none" stroke="#A5ADBA" stroke-width="1.3"/>
<path d="M6.8 7.2 L12 2 M8.4 1.9 H12 V5.5" fill="none" stroke="#A5ADBA" stroke-width="1.3"/>
</svg>
<div class="t" style="right:7px;top:598px;font-size:12px;font-weight:400;color:#A5ADBA;letter-spacing:-0.102px;">Report Date: 10/May/24 12:53 PM / Version: 5.0.0.800</div>
</body></html>
